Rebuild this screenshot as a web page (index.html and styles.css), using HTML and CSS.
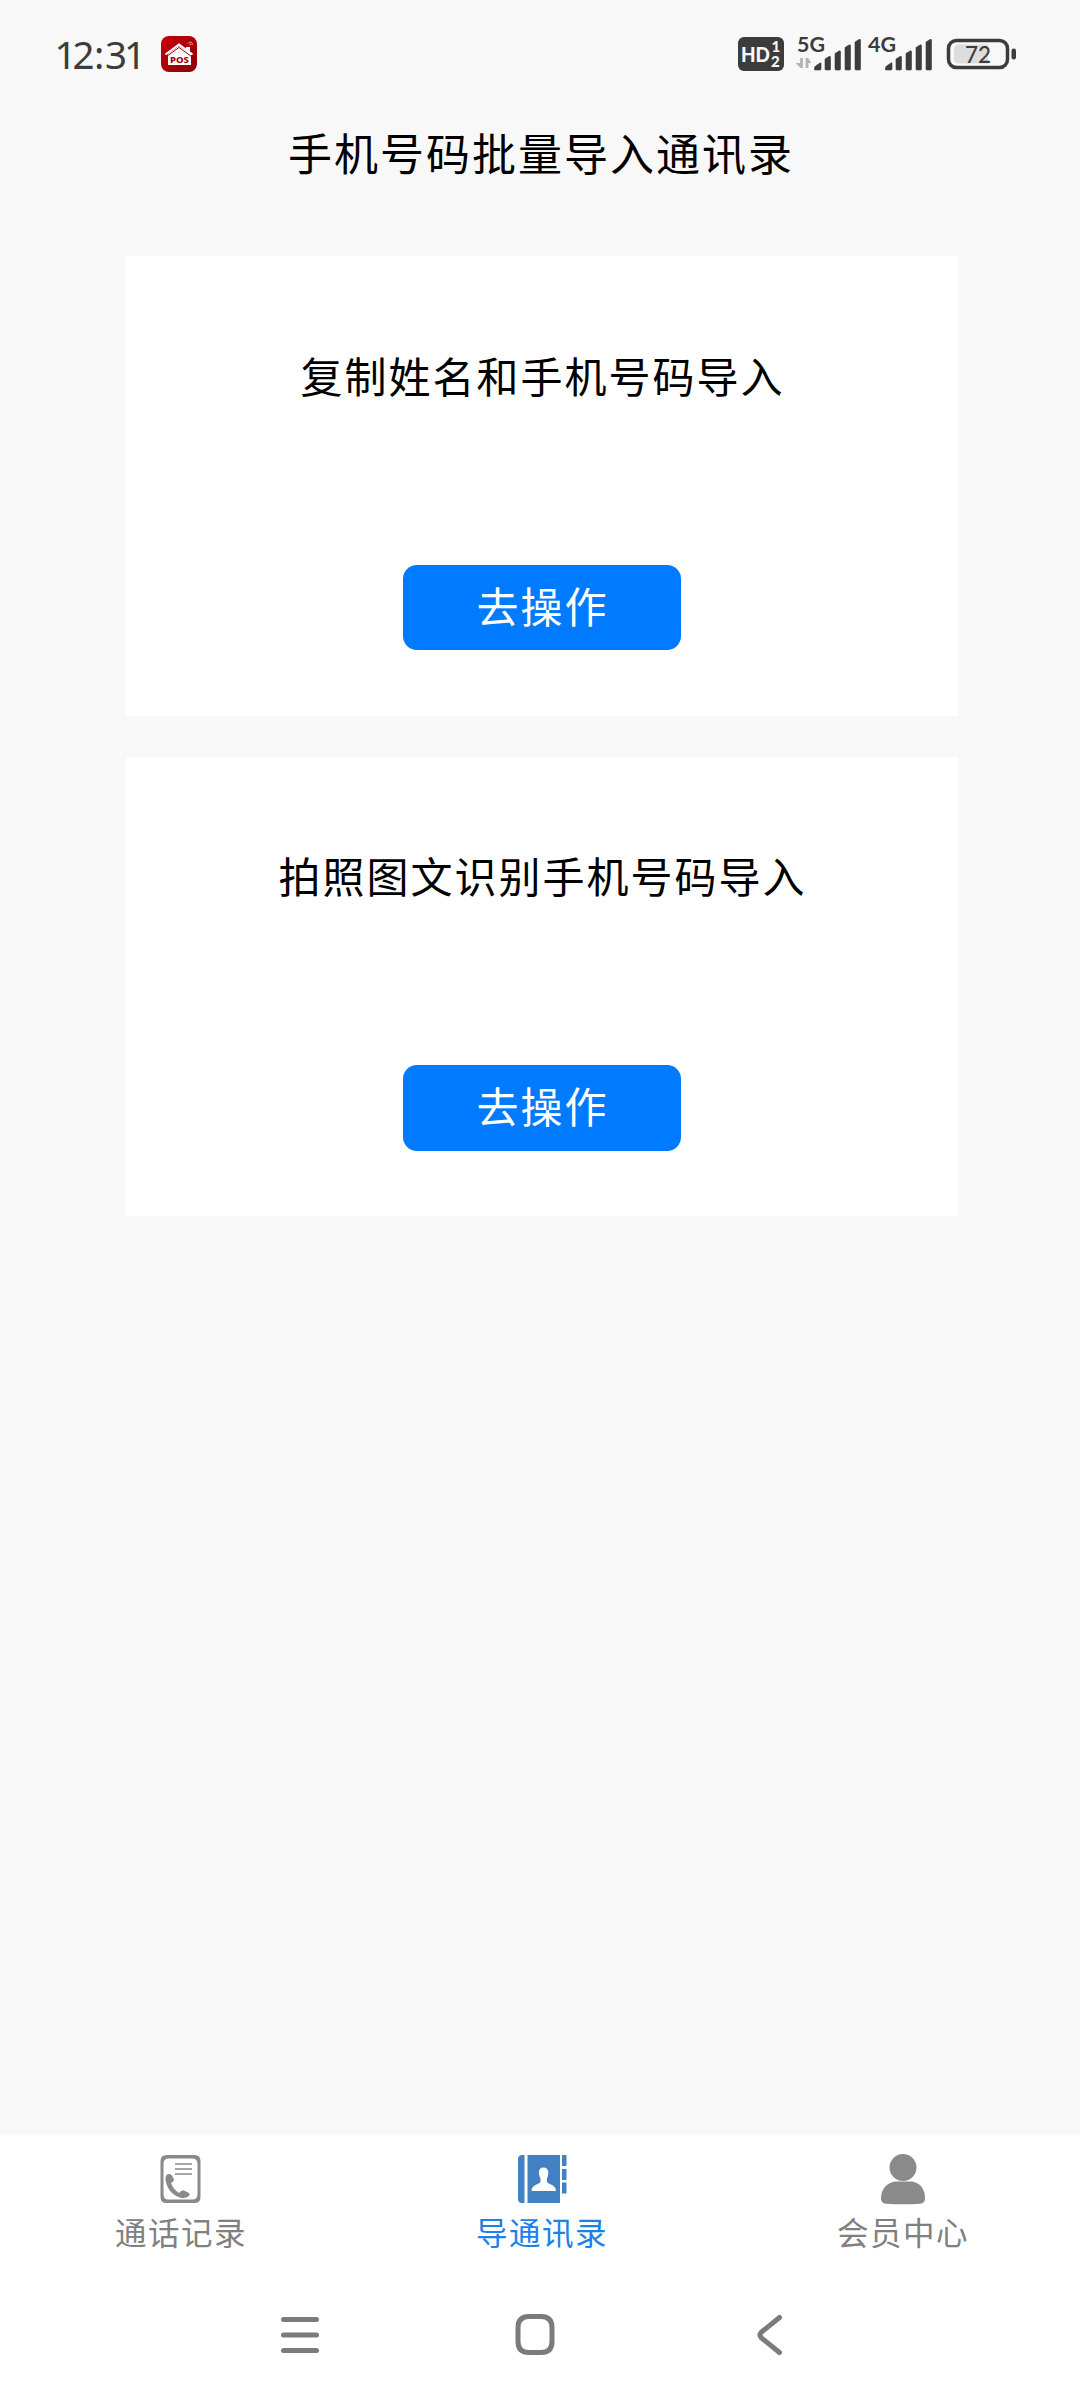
FILE: index.html
```html
<!DOCTYPE html>
<html lang="zh-CN">
<head>
<meta charset="utf-8">
<title>手机号码批量导入通讯录</title>
<link rel="stylesheet" href="styles.css">
</head>
<body>
<header class="status">
  <svg class="clock" width="100" height="60" viewBox="0 0 100 60"><text x="6.500 24.500 46 57 76" y="44.500" font-size="38.500">12:31</text></svg>
  <svg class="app" width="36" height="36" viewBox="0 0 36 36">
    <defs><linearGradient id="red" x1="0" y1="0" x2="1" y2="1"><stop offset="0" stop-color="#c8000c"/><stop offset="1" stop-color="#8c0006"/></linearGradient></defs>
    <rect width="36" height="36" rx="8" fill="url(#red)"/>
    <path d="M7 18 18 10l12 8v11H7z" fill="#fff"/>
    <path d="M4.500 18.500 18 8.500l13.500 10" fill="none" stroke="#fff" stroke-width="2"/>
    <path d="M25 11h4v6l-4-3z" fill="#fff"/>
    <path d="M5.500 20.500 18 11.500l12.500 9" fill="none" stroke="#b4000a" stroke-width="1"/>
    <path d="M27 7.500c1-2 4-2 4.500 1M28.500 9c.5-1 1.500-1 2 0" fill="none" stroke="#f5b5b5" stroke-width="1"/>
    <text x="9" y="27" font-size="9" font-weight="800" fill="#a50009" textLength="19" lengthAdjust="spacingAndGlyphs">POS</text>
  </svg>
  <svg class="signals" width="280" height="56" viewBox="0 -12 280 56">
    <rect y="2" width="46" height="34" rx="6"/>
    <g fill="#f8f8f8" font-weight="900"><text x="3" y="26.500" font-size="20" textLength="29" lengthAdjust="spacingAndGlyphs">HD</text><text x="33.500" y="17" font-size="15">1</text><text x="33" y="31.500" font-size="15">2</text></g>
    <g font-weight="700" font-size="21"><text x="59" y="17" textLength="28" lengthAdjust="spacingAndGlyphs">5G</text><text x="130" y="17" textLength="28" lengthAdjust="spacingAndGlyphs">4G</text></g>
    <path d="M63.500 23v10M69 33V23" fill="none" stroke="#b4b4b4" stroke-width="2.800"/>
    <path d="M57.500 28h5v5zM69.500 22.500v5.500h4z" fill="#b4b4b4"/>
    <g id="bars" stroke="#3c3c3c" stroke-width=".6"><path d="M76.500 35v-2q0-1 1-2l4.500-3q1-.5 1 .5V34q0 1-1 1zM87 24l4-2.500q1.500-.5 1.500.500V34q0 1-1 1H88q-1 0-1-1zM97 18.500l4-2.500q1.500-.5 1.500.500V34q0 1-1 1H98q-1 0-1-1zM107 12.500l4-2.500q1.500-.5 1.500.500V34q0 1-1 1h-3.500q-1 0-1-1zM117 7l4-2.500q1.500-.5 1.500.500V34q0 1-1 1h-3.500q-1 0-1-1z"/></g>
    <use href="#bars" x="71"/>
    <rect x="210.500" y="5.500" width="59" height="27" rx="8" fill="none" stroke="#3c3c3c" stroke-width="3.500"/>
    <path d="M221 9.500h29v19h-29q-5 0-5-5v-9q0-5 5-5z" fill="#ddd"/>
    <rect x="273.500" y="13.500" width="4.500" height="11" rx="2.200"/>
    <text x="227" y="27.500" font-size="23.500" font-weight="500" textLength="26" lengthAdjust="spacingAndGlyphs">72</text>
  </svg>
</header>
<h1 class="title">手机号码批量导入通讯录</h1>
<main class="cards">
  <section class="card"><h2 class="card-title">复制姓名和手机号码导入</h2><button class="action">去操作</button></section>
  <section class="card"><h2 class="card-title">拍照图文识别手机号码导入</h2><button class="action">去操作</button></section>
</main>
<nav class="tabs">
  <a class="tab">
    <svg width="54" height="54" viewBox="0 0 54 54"><path fill-rule="evenodd" d="M12.500 2h28q6 0 6 6v36q0 6-6 6h-28q-6 0-6-6V8q0-6 6-6zm2 3.500q-5 0-5 5.500v30q0 5.500 5 5.500h24q5 0 5-5.500V11q0-5.500-5-5.500z"/><path d="M21 11h17M21 16h17M21 21h17" stroke="#8a8a8a" stroke-width="1.500"/><path d="M12.500 22q3-2 5.500.5l2 4q0 2-3 3.500 2 6 8 10 3-3.500 5-2.500l5 2.500q1.500 1 0 3-3.500 3-9 1.500Q13 40 11.500 26q0-3 1-4z"/></svg>
    <span>通话记录</span>
  </a>
  <a class="tab active">
    <svg width="54" height="54" viewBox="0 0 54 54"><path d="M6 2h3.500v48H6q-3-1-3-4V6q0-3 3-4zM12.500 2h32.500v48H12.500zM47 2h4.500v11H47zM47 16h4.500v11H47zM47 29.500h4.500v11H47z"/><path fill="#fff" d="M28.500 14.500c6 0 5.500 7 3.500 11v3c0 3 9 2.500 9 9.500H16.500c0-7 9-6.500 9-9.500v-3c-2-4-3-11 3-11z"/></svg>
    <span>导通讯录</span>
  </a>
  <a class="tab">
    <svg width="54" height="54" viewBox="0 0 54 54"><circle cx="27" cy="14.500" r="13.500"/><path d="M21 28.500h13c10 0 15 8 15 16.500 0 4-2 5.500-5 5.700q-17 1-34 0C7 50.500 5 49 5 45c0-8.500 6-16.500 16-16.500z"/></svg>
    <span>会员中心</span>
  </a>
</nav>
<footer class="system">
  <svg width="520" height="50" viewBox="0 0 520 50"><g fill="none" stroke="#7b7b7b" stroke-width="5" stroke-linecap="round" stroke-linejoin="round"><path d="M3.500 9.500h33M3.500 25h33M3.500 40.500h33"/><path d="M249 6.500h12q11 0 11 11v14q0 11-11 11h-12q-11 0-11-11v-14q0-11 11-11z"/><path d="M499.500 7.500l-18 14.500q-3 3 0 6l18 14.500"/></g></svg>
</footer>
</body>
</html>
```
FILE: styles.css
```css
* { box-sizing: border-box; }
body {
  margin: 0;
  height: 2400px;
  display: flex;
  flex-direction: column;
  background: #f8f8f8;
  color: #000;
  font-family: "Noto Sans CJK SC", sans-serif;
}
.status {
  height: 107px;
  padding: 24px 62px 0 48px;
  display: flex;
  align-items: flex-start;
  fill: #3c3c3c;
  font-family: "Noto Sans", sans-serif;
}
.clock { font-weight: 400; }
.app { margin: 12px 0 0 13px; }
.signals { margin-left: auto; margin-top: -1px; font-family: Lato, sans-serif; }
.title {
  margin: 0;
  height: 90px;
  line-height: 90px;
  text-align: center;
  text-indent: 2px;
  font-size: 44px;
  font-weight: 400;
  letter-spacing: 2px;
}
.cards {
  flex: 1;
  padding: 59px 122px 0 126px;
  display: flex;
  flex-direction: column;
  gap: 41px;
}
.card {
  height: 460px;
  padding-top: 83px;
  display: flex;
  flex-direction: column;
  align-items: center;
  background: #fff;
}
.card + .card { height: 459px; padding-top: 82px; }
.card-title {
  margin: 0;
  height: 72px;
  line-height: 72px;
  text-indent: 1px;
  font-size: 42px;
  font-weight: 400;
  letter-spacing: 2px;
}
.action {
  width: 278px;
  height: 85px;
  margin-top: 154px;
  padding: 0 0 5px 1px;
  border: 0;
  border-radius: 14px;
  background: #007aff;
  color: #fff;
  font: 400 42px/80px "Noto Sans CJK SC", sans-serif;
  letter-spacing: 2px;
}
.card + .card .action { height: 86px; padding-bottom: 6px; }
.tabs {
  height: 145px;
  padding-top: 18px;
  display: grid;
  grid-template-columns: repeat(3, 361px);
  background: #fff;
  color: #808080;
  fill: #8a8a8a;
}
.tab {
  display: flex;
  flex-direction: column;
  align-items: center;
  font-size: 31.5px;
  line-height: 48px;
  letter-spacing: 1.5px;
}
.tab span { margin-top: 0; padding-left: 1px; }
.active { color: #1a82e8; fill: #4282c2; }
.system {
  height: 120px;
  padding: 30px 0 0 280px;
  background: #fff;
}
```
